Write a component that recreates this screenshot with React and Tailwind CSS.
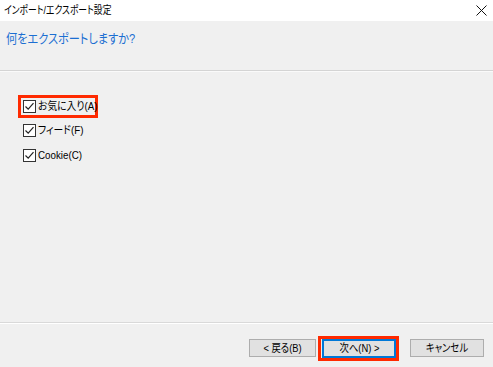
import React from "react";

const font = { fontFamily: '"Liberation Sans", "Noto Sans CJK JP", sans-serif' };

function Check() {
  return (
    <span className="flex h-[13px] w-[13px] shrink-0 items-center justify-center border border-[#333333] bg-white">
      <svg width="11" height="11" viewBox="0 0 11 11">
        <path d="M1.5 5.5 L4.2 8.2 L9.5 2.2" fill="none" stroke="#222" strokeWidth="1.2" />
      </svg>
    </span>
  );
}

function Row({ label }) {
  return (
    <div className="flex items-center gap-[2px] whitespace-nowrap">
      <Check />
      <span className="inline-block origin-left scale-x-[0.89] text-[11px] leading-none text-black">{label}</span>
    </div>
  );
}

function Btn({ children, focused }) {
  const base =
    "flex h-[18px] items-center justify-center whitespace-nowrap bg-[#e1e1e1] text-[11px] leading-none text-black";
  return (
    <button
      className={
        focused
          ? base + " h-[19px] w-[74px] border-2 border-[#0078d7]"
          : base + " w-[74px] border border-[#adadad]"
      }
    >
      <span className="inline-block scale-x-[0.85]">{children}</span>
    </button>
  );
}

export default function App() {
  return (
    <div
      className="flex h-[367px] w-[493px] flex-col overflow-hidden bg-[#f0f0f0] [font-feature-settings:'palt']"
      style={font}
    >
      <div className="flex h-[21px] shrink-0 items-center justify-between bg-white pl-[4px] pr-[5px]">
        <span className="inline-block origin-left scale-x-[0.8] whitespace-nowrap text-[11px] leading-none text-black">
          インポート/エクスポート設定
        </span>
        <svg width="11" height="11" viewBox="0 0 11 11" className="mr-[1px]">
          <path d="M0.5 0.5 L10.5 10.5 M10.5 0.5 L0.5 10.5" stroke="#111" strokeWidth="1" />
        </svg>
      </div>
      <div className="h-[49px] shrink-0 pl-[6px] pt-[9px]">
        <div className="origin-left scale-x-[0.86] whitespace-nowrap text-[13px] leading-[18px] text-[#1c6fd2]">
          何をエクスポートしますか?
        </div>
      </div>
      <div className="h-px shrink-0 bg-[#d4d4d4]" />
      <div className="h-px shrink-0 bg-[#fafafa]" />
      <div className="flex flex-1 flex-col items-start pl-[18px] pt-[23px]">
        <div className="flex h-[23px] w-[80px] items-center border-[3px] border-[#ff2a00] pl-[2px]">
          <Row label="お気に入り(A)" />
        </div>
        <div className="flex h-[24px] items-center pl-[5px]">
          <Row label="フィード(F)" />
        </div>
        <div className="mt-px flex h-[24px] items-center pl-[5px]">
          <Row label="Cookie(C)" />
        </div>
      </div>
      <div className="h-px shrink-0 bg-[#d9d9d9]" />
      <div className="h-px shrink-0 bg-white" />
      <div className="flex h-[43px] shrink-0 items-start justify-end pr-[9px] pt-[15px]">
        <div className="w-[67px]">
          <div className="[&>button]:w-[67px]">
            <Btn>&lt; 戻る(B)</Btn>
          </div>
        </div>
        <div className="ml-[2px] mt-[-3px] flex h-[25px] w-[81px] items-center border-[3px] border-[#ff2a00] pl-[1px]">
          <Btn focused>次へ(N) &gt;</Btn>
        </div>
        <div className="ml-[11px]">
          <Btn>キャンセル</Btn>
        </div>
      </div>
    </div>
  );
}
